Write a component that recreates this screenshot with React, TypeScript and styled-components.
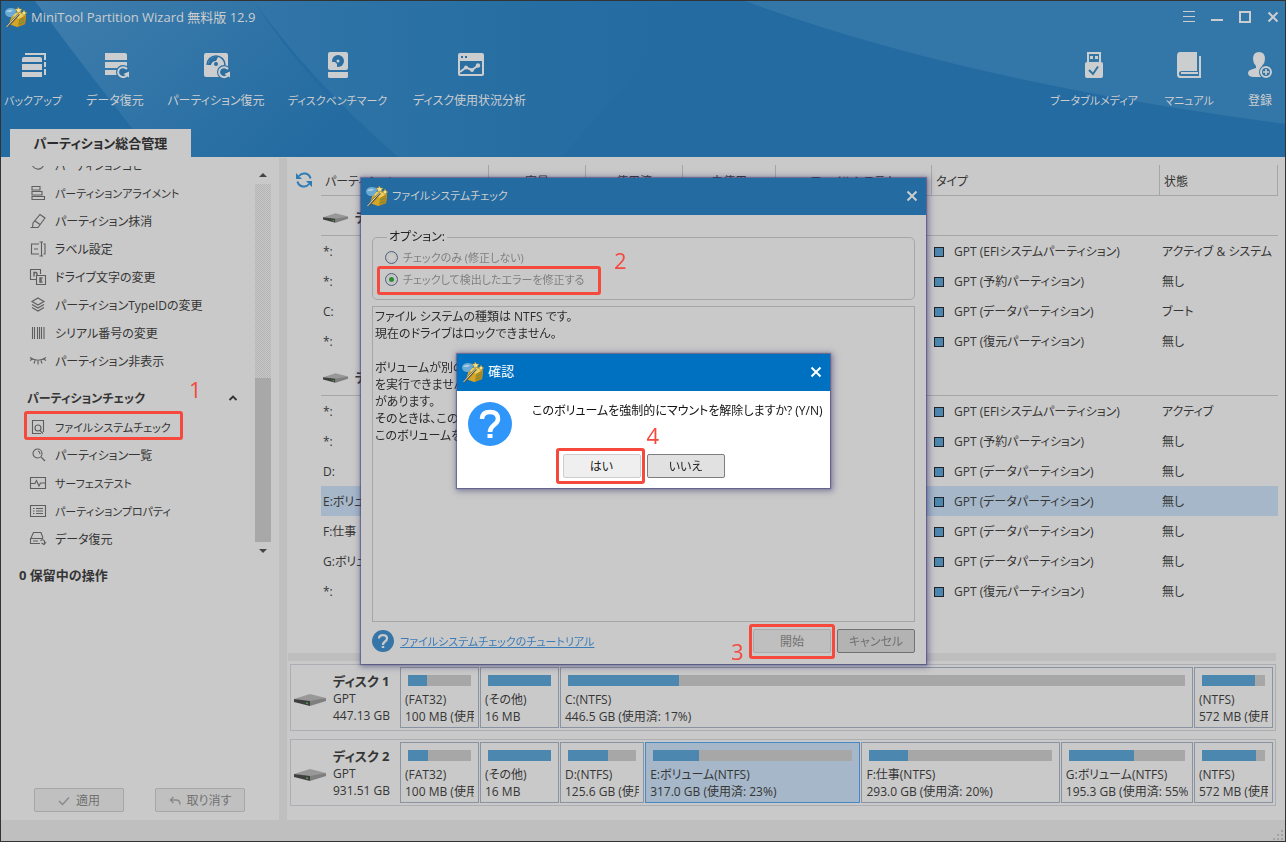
import React from "react";
import styled, { createGlobalStyle, css } from "styled-components";

const color = {
  surface: "#c9c9c9",
  panel: "#bfbfbf",
  header: "#236ba1",
  text: "#353535",
  muted: "#808080",
  line: "#a6a6a6",
  bar: "#4b87ae",
  light: "#cbcdcf",
  mark: "#f4493c",
};

const GlobalStyle = createGlobalStyle`
  * { box-sizing: border-box; }
  body {
    margin: 0;
    font-family: "Open Sans", "Noto Sans CJK JP", sans-serif;
    font-size: 12px;
    line-height: 17px;
    font-feature-settings: "palt";
    color: ${color.text};
    background: #333;
  }
  button, input, textarea {
    font: inherit;
    font-feature-settings: inherit;
    color: inherit;
    margin: 0;
    padding: 0;
  }
`;

/* Labels written only in katakana are set one size smaller than mixed ones. */
const labelSize = (label: string) => (/^[\u30a0-\u30ff]+$/.test(label) ? 11 : 12);

/* ---------- window and header ---------- */

const Window = styled.div`
  position: relative;
  display: flex;
  flex-direction: column;
  height: 100vh;
  min-height: 700px;
  overflow: hidden;
  border: 1px solid #333;
  background: ${color.surface};
`;

const Header = styled.header`
  position: relative;
  isolation: isolate;
  flex: none;
  background: ${color.header};
  color: ${color.light};
`;

const HeaderArt = styled.svg`
  position: absolute;
  inset: 0;
  z-index: -1;
  width: 100%;
  height: 100%;
`;

const TitleBar = styled.div`
  display: flex;
  align-items: center;
  gap: 4px;
  height: 32px;
  padding: 0 4px;
`;

const Title = styled.h1<{ $bright?: boolean; $small?: boolean }>`
  flex: 1;
  margin: 0;
  font-size: ${(p) => (p.$small ? 11 : 13)}px;
  font-weight: 400;
  white-space: nowrap;
  color: ${(p) => (p.$bright ? "#fff" : color.light)};
`;

const WindowControls = styled.div`
  display: flex;
  gap: 12px;
`;

const IconButton = styled.button`
  display: grid;
  place-items: center;
  width: 16px;
  height: 16px;
  border: 0;
  background: none;
`;

const Toolbar = styled.nav`
  display: flex;
  justify-content: space-between;
  height: 96px;
  padding: 19px 4px 0 4px;
`;

const ToolGroup = styled.div`
  display: flex;
  align-items: flex-start;
  gap: 25px;
`;

const Tool = styled.button<{ $width: number; $size: number }>`
  display: flex;
  flex-direction: column;
  align-items: center;
  gap: 12px;
  width: ${(p) => p.$width}px;
  border: 0;
  background: none;
  font-size: ${(p) => p.$size}px;
  white-space: nowrap;
`;

const Tab = styled.button`
  display: block;
  width: 181px;
  height: 28px;
  margin-left: 9px;
  border: 0;
  background: ${color.surface};
  color: #2d2d2d;
  font-size: 13px;
  font-weight: 700;
  white-space: nowrap;
`;

/* ---------- sidebar ---------- */

const Body = styled.div`
  display: flex;
  flex: 1;
  min-height: 0;
`;

const Sidebar = styled.aside`
  display: flex;
  flex-direction: column;
  flex: 0 0 278px;
  padding-top: 9px;
`;

const ScrollArea = styled.div`
  display: flex;
  flex: 1;
  min-height: 0;
`;

const ActionList = styled.div`
  display: flex;
  flex: 1;
  flex-direction: column;
  justify-content: flex-end;
  overflow: hidden;
  padding-bottom: 7px;
`;

const Action = styled.button<{ $size: number }>`
  display: flex;
  flex: none;
  align-items: center;
  gap: 8px;
  width: 100%;
  height: 28px;
  padding-left: 28px;
  border: 0;
  background: none;
  font-size: ${(p) => p.$size}px;
  text-align: left;
  white-space: nowrap;
`;

const ActionSlot = styled.div`
  position: relative;
  flex: none;
`;

const GroupHeader = styled.button`
  display: flex;
  flex: none;
  align-items: center;
  justify-content: space-between;
  height: 38px;
  padding: 8px 17px 0 26px;
  border: 0;
  background: none;
  font-weight: 700;
`;

const ScrollBar = styled.div`
  display: flex;
  flex-direction: column;
  align-items: center;
  width: 16px;
  margin-right: 8px;
`;

const ScrollArrow = styled.div<{ $down?: boolean }>`
  display: grid;
  place-items: center;
  width: 16px;
  height: 18px;
  svg {
    transform: ${(p) => (p.$down ? "rotate(180deg)" : "none")};
  }
`;

const ScrollTrack = styled.div`
  display: flex;
  flex: 1;
  align-items: flex-end;
  width: 16px;
  background: repeating-conic-gradient(#b5b5b5 0% 25%, #c6c6c6 0% 50%) 0 0 / 2px 2px;
`;

const ScrollThumb = styled.div`
  width: 16px;
  height: 164px;
  background: #a8a8a8;
`;

const Pending = styled.section`
  display: flex;
  flex-direction: column;
  justify-content: space-between;
  flex: 0 0 260px;
  padding: 6px 0 8px 18px;
`;

const PendingTitle = styled.h2`
  margin: 0;
  font-size: 13px;
  font-weight: 700;
  line-height: 18px;
`;

const PendingButtons = styled.div`
  display: flex;
  gap: 31px;
  padding-left: 15px;
`;

const Divider = styled.div`
  flex: 0 0 8px;
  margin-top: 1px;
  background: ${color.panel};
`;

type Tone = "faint" | "dim" | "strong" | "light" | "normal";
const tones: Record<Tone, ReturnType<typeof css>> = {
  faint: css`border-color: #a6a6a6; background: #c0c0c0; color: #717171;`,
  dim: css`border-color: #ababab; background: #bfbfbf; color: #717171;`,
  strong: css`border-color: #717171; background: #b3b3b3; color: #717171;`,
  light: css`border-color: #cdcdcd; background: #efefef; color: #222;`,
  normal: css`border-color: #7e7e7e; background: #e1e1e1; color: #222;`,
};

const Button = styled.button<{ $tone: Tone; $wide?: boolean }>`
  display: flex;
  align-items: center;
  justify-content: center;
  gap: 6px;
  width: ${(p) => (p.$wide ? 90 : 78)}px;
  height: 24px;
  padding-top: 1px;
  border: 1px solid;
  border-radius: 2px;
  ${(p) => tones[p.$tone]}
`;

/* ---------- partition table ---------- */

const Main = styled.main`
  display: flex;
  flex: 1;
  flex-direction: column;
  min-width: 0;
`;

const TableArea = styled.section`
  display: flex;
  flex: 1;
  align-items: flex-start;
  gap: 9px;
  min-height: 0;
  overflow: hidden;
  padding: 8px 7px 0 9px;
`;

const RefreshButton = styled(IconButton)`
  flex: none;
  margin-top: 7px;
`;

const Table = styled.table`
  flex: 1;
  min-width: 0;
  table-layout: fixed;
  border-collapse: separate;
  border-spacing: 0;
`;

const HeadCell = styled.th<{ $left?: boolean }>`
  height: 31px;
  padding: 2px 4px 0;
  border-right: 1px solid ${color.line};
  border-bottom: 1px solid ${color.line};
  font-weight: 400;
  text-align: ${(p) => (p.$left ? "left" : "center")};
  white-space: nowrap;
`;

const Cell = styled.td`
  height: 30px;
  padding: 1px 2px 0;
  overflow: hidden;
  white-space: nowrap;
`;

const Row = styled.tr<{ $selected?: boolean }>`
  background: ${(p) => (p.$selected ? "#a5b7c8" : "transparent")};
`;

const DiskCell = styled.td`
  height: 40px;
  padding: 4px 2px 0;
  border-bottom: 1px solid ${color.line};
  font-size: 13px;
  font-weight: 700;
  white-space: nowrap;
`;

const Inline = styled.span<{ $gap: number }>`
  display: flex;
  align-items: center;
  gap: ${(p) => p.$gap}px;
`;

const Swatch = styled.span`
  width: 10px;
  height: 10px;
  border: 1px solid #202428;
  background: #4a86ae;
`;

/* ---------- disk map ---------- */

const Splitter = styled.div`
  flex: none;
  height: 8px;
  margin: 0 9px 3px 1px;
  background: #bebebe;
`;

const DiskMap = styled.section`
  display: flex;
  flex: none;
  flex-direction: column;
  gap: 8px;
  padding: 0 9px 14px 3px;
`;

const Disk = styled.div`
  display: flex;
  gap: 1px;
  padding: 2px;
  border: 1px solid #acaeb3;
`;

const DiskInfo = styled.div`
  display: flex;
  flex: 0 0 106px;
  align-items: center;
  gap: 7px;
  padding: 2px 0 0 1px;
  white-space: nowrap;
`;

const DiskName = styled.strong`
  display: block;
  font-size: 13px;
`;

const Part = styled.div<{ $grow?: number; $selected?: boolean }>`
  flex: ${(p) => (p.$grow ? `${p.$grow} 1 0` : "0 0 79px")};
  min-width: 0;
  padding: 7px 4px 2px;
  border: 1px solid ${(p) => (p.$selected ? "#4489c4" : "#8993a1")};
  background: ${(p) => (p.$selected ? "#a5b7c8" : "transparent")};
`;

const Usage = styled.div`
  height: 11px;
  margin: 0 3px 5px;
  background: #a7a7a7;
`;

const Used = styled.div`
  height: 100%;
  background: ${color.bar};
`;

const PartLine = styled.div`
  overflow: hidden;
  white-space: nowrap;
`;

const StatusBar = styled.footer`
  display: flex;
  flex: none;
  align-items: flex-end;
  justify-content: flex-end;
  height: 21px;
  background: ${color.panel};
`;

/* ---------- dialogs ---------- */

const Layer = styled.div`
  position: fixed;
  inset: 0;
  display: grid;
  place-items: center;
  padding-left: 1px;
`;

const Dialog = styled.section<{ $front?: boolean }>`
  width: ${(p) => (p.$front ? 373 : 565)}px;
  background: ${(p) => (p.$front ? "#fff" : color.surface)};
  box-shadow: 0 0 1px 1px rgba(60, 60, 120, 0.5), 1px 1px 6px 2px rgba(50, 50, 110, 0.5);
`;

const DialogTitle = styled.div<{ $front?: boolean }>`
  display: flex;
  align-items: center;
  gap: 4px;
  height: 37px;
  padding: 0 6px 2px 5px;
  background: ${(p) => (p.$front ? "#0070c1" : color.header)};
`;

const DialogBody = styled.div`
  padding: 13px 11px 11px;
`;

const Options = styled.fieldset`
  margin: 0;
  padding: 0 12px 9px;
  border: 1px solid ${color.line};
  border-radius: 5px;
`;

const Legend = styled.legend`
  margin-left: 2px;
  padding: 0 2px;
  line-height: 18px;
  color: #222;
`;

const RadioRow = styled.label`
  display: flex;
  align-items: center;
  gap: 5px;
  height: 22px;
  color: ${color.muted};
  font-size: 11px;
  white-space: nowrap;
`;

const Radio = styled.input`
  appearance: none;
  display: grid;
  place-items: center;
  width: 13px;
  height: 13px;
  border: 1px solid #4c617c;
  border-radius: 50%;
  background: radial-gradient(#cfcfcf, #bcbcbc);
  &:checked::before {
    content: "";
    width: 5px;
    height: 5px;
    border-radius: 50%;
    background: #2d8a35;
  }
`;

const Log = styled.textarea`
  display: block;
  width: 100%;
  height: 316px;
  margin-top: 6px;
  padding: 1px 2px;
  border: 1px solid ${color.line};
  border-radius: 0;
  outline: 0;
  resize: none;
  overflow: hidden;
  background: transparent;
  color: #2c2c2c;
`;

const DialogFooter = styled.div`
  display: flex;
  align-items: center;
  gap: 6px;
  padding-top: 7px;
`;

const Tutorial = styled.a`
  flex: 1;
  color: #3b7cb8;
  font-size: 11px;
  white-space: nowrap;
`;

const Question = styled.div`
  display: flex;
  gap: 20px;
  padding: 11px 0 8px 11px;
  color: #111;
  white-space: nowrap;
`;

const Answers = styled.div`
  display: flex;
  justify-content: center;
  gap: 6px;
  padding-bottom: 10px;
`;

/* ---------- step marks ---------- */

const Marked = styled.div`
  position: relative;
`;

const MarkBox = styled.span<{ $inset: string }>`
  position: absolute;
  inset: ${(p) => p.$inset};
  border: 3px solid ${color.mark};
  border-radius: 3px;
  pointer-events: none;
`;

const MarkNumber = styled.span<{ $left: number; $top: number }>`
  position: absolute;
  left: ${(p) => p.$left}px;
  top: ${(p) => p.$top}px;
  color: ${color.mark};
  font-size: 22px;
  line-height: 24px;
`;

/* ---------- drawings ---------- */

const Logo = () => (
  <svg width="22" height="22" viewBox="0 0 22 22" aria-hidden="true">
    <path d="M7 9 L13 6 L21 9 L20 18 L12 21 L4 18 Z" fill="#d3a628" />
    <path d="M6 9 L13 6 L21 9 L14 13 Z" fill="#e8cf62" />
    <path d="M14 13 L21 9 L20 18 L13 21 Z" fill="#bb8716" />
    <path d="M0 6 Q1 2 6 2 Q10 2 12 5 L7 11 L4 11 Q0 10 0 6Z" fill="#6aa9d2" />
    <path d="M1 6 Q3 3 8 4 L6 6Z" fill="#a8cfe6" />
    <path d="M13 1 L14.500 3 L17 3 L15.500 5 L16 7 L14 6 L12 7 L12 5 L10 3 L12.500 3Z" fill="#f3e38d" stroke="#a78125" strokeWidth=".5" />
    <path d="M19 4 L20 6 L22 7 L20 8 L19 10 L18 8 L16 7 L18 6Z" fill="#f5e389" stroke="#a78125" strokeWidth=".5" />
    <path d="M2 21 L14 8" stroke="#5b5338" strokeWidth="2.200" />
    <path d="M1.500 21 L13.500 8" stroke="#d8d8cf" strokeWidth="1" />
    <path d="M14 15 L19 13 M14 18 L19 16" stroke="#5e9a54" strokeWidth="1" />
  </svg>
);

const Close = ({ fill }: { fill: string }) => (
  <svg width="12" height="12" viewBox="0 0 12 12" aria-hidden="true">
    <path d="M1.500 1.500 L10.500 10.500 M10.500 1.500 L1.500 10.500" stroke={fill} strokeWidth="2" />
  </svg>
);

const ToolIcon = ({ children }: { children: React.ReactNode }) => (
  <svg width="28" height="28" viewBox="0 0 28 28" fill="none" stroke="none" aria-hidden="true">
    {children}
  </svg>
);

const L = color.light;
const Redo = () => (
  <>
    <circle cx="22" cy="20" r="7" fill="#2a6ea2" />
    <path d="M26 17 A5 5 0 1 0 26.500 22.500" stroke={L} strokeWidth="2" />
    <path d="M28 19.500 L28 25.500 L22.500 22 Z" fill={L} />
  </>
);

const tools: Record<string, React.ReactNode> = {
  backup: (
    <>
      <path d="M7 3 V2 H26 V8 M26 10 V15 M26 17 V22 H25" stroke={L} strokeWidth="2" />
      <path d="M5 5 H21 Q23 5 23 7 V10 H3 V7 Q3 5 5 5Z M3 12 H23 V18 H3Z M3 20 H23 V25 H3Z" fill={L} />
    </>
  ),
  data: (
    <>
      <path d="M4 1 H24 Q26 1 26 3 V8 H4Z M4 10 H26 V16 H4Z M4 18 H26 V23 H4Z" fill={L} />
      <Redo />
    </>
  ),
  partition: (
    <>
      <rect x="2" y="1" width="24" height="24" rx="2" fill={L} />
      <path d="M5 13 A9 9 0 0 1 23 13" stroke="#2a6ea2" strokeWidth="1.500" />
      <path d="M6 13 A8 8 0 0 1 16 5 L14 9 Q10 9 9 13Z" fill="#2a6ea2" />
      <circle cx="14" cy="12" r="2" fill="#2a6ea2" />
      <Redo />
    </>
  ),
  bench: (
    <>
      <rect x="4" y="0" width="20" height="18" rx="2" fill={L} />
      <circle cx="14" cy="9" r="6" fill="#2a6ea2" />
      <path d="M8 15 L8 10 L11 10 L13 12 L13 15Z" fill={L} />
      <circle cx="14" cy="9" r="1.500" fill={L} />
      <path d="M4 20 H24 V25 Q24 26 22 26 H6 Q4 26 4 25Z" fill={L} />
    </>
  ),
  usage: (
    <>
      <rect x="2" y="1" width="26" height="23" rx="2" fill={L} />
      <path d="M5 4 H7 V6 H5Z M9 4 H11 V6 H9Z M4 9 H26 V22 H4Z" fill="#2a6ea2" />
      <path d="M4 20 L10 15.500 L16 18 L22 13.500" stroke={L} strokeWidth="2" />
      <circle cx="10" cy="15.500" r="2" fill={L} />
      <circle cx="16" cy="18" r="2" fill={L} />
      <circle cx="22" cy="13.500" r="2.200" fill={L} />
    </>
  ),
  usb: (
    <>
      <path d="M8 10 V1 H20 V10" stroke={L} strokeWidth="2" />
      <path d="M10 4 H13 V7 H10Z M15 4 H18 V7 H15Z" fill={L} />
      <rect x="5" y="10" width="18" height="16" rx="2" fill={L} />
      <path d="M9 18 L13 22 L18 14.500" stroke="#3074a5" strokeWidth="2" />
    </>
  ),
  manual: (
    <>
      <path d="M5 0 H22 V19 H7 Q4 19 4 22 Q4 24 6 24 H24 V4 H26 V26 H5 Q2 26 2 22 V4 Q2 0 5 0Z" fill={L} />
      <rect x="6" y="20" width="17" height="2" fill={L} />
    </>
  ),
  register: (
    <>
      <path d="M13 0 Q19 0 19 7 Q19 11 16 14 V16 L20 18 V25 H8 Q2 25 2 21 Q2 18 7 17 L10 16 V14 Q7 11 7 7 Q7 0 13 0Z" fill={L} />
      <circle cx="20" cy="20" r="7" fill="#3074a5" />
      <circle cx="20" cy="20" r="5" stroke={L} strokeWidth="2" />
      <path d="M20 17 V23 M17 20 H23" stroke={L} strokeWidth="1.600" />
    </>
  ),
};

const glyphs: Record<string, React.ReactNode> = {
  copy: <path d="M3 6 A6 6 0 1 0 15 8 H9 V3" />,
  align: <path d="M3 2.500 H11 V6 H3Z M3 7.500 H13 V11 H3Z M3 12.500 H15.500 V15.500 H3Z" />,
  erase: <path d="M1.500 15.500 H9 L16 6 L11 2.500 L4 11 L3.500 15.500 M6 9 L11 12.500" />,
  label: <path d="M10 4 H2.500 V14 H10 M5 9 H9 M10.500 2 H14 M12.500 2 V16 M10.500 16 H14 M14.500 4 H16 V14 H14.500" />,
  letter: (
    <>
      <path d="M7 11.500 H1.500 V1.500 H11.500 V6 M7.500 7.500 H16.500 V16.500 H7.500Z" />
      <path d="M5 8.500 V4.500 H7 Q8.500 5 8 7 M13.500 10 H11 V14 H13.500 M11 12 H13" strokeWidth="1.400" />
    </>
  ),
  layers: <path d="M9 2 L15 5.500 L9 9 L3 5.500Z M3 8.500 L9 12 L15 8.500 M3 11.500 L9 15 L15 11.500" />,
  barcode: <path d="M3.500 3 V15 M5.500 3 V15 M8.500 3 V15 M10.500 3 V15 M12.500 3 V15 M15 3 V15" />,
  hidden: <path d="M1 5.500 Q9 11 17 5.500 M1 8.500 L3.500 7 M5 11.500 L6 8.500 M9 12.500 V9 M13 11.500 L12 8.500 M17 8.500 L14.500 7" />,
  check: (
    <>
      <path d="M12 15.500 H3.500 V2.500 H14.500 V14" />
      <circle cx="9" cy="10" r="3" />
      <path d="M11 12.500 L14 15.500" />
    </>
  ),
  explore: (
    <>
      <circle cx="8.500" cy="7.500" r="4.500" />
      <path d="M9 5 Q11 5.500 11 8 M12 11 L16 15" />
    </>
  ),
  surface: <path d="M1.500 3.500 H16.500 V14.500 H1.500Z M1.500 9.500 H6 L7.500 6.500 L10 12 L11.500 9 H16.500" />,
  properties: <path d="M1.500 3.500 H16.500 V14.500 H1.500Z M4 6.500 H5.500 M4 9 H5.500 M4 11.500 H5.500 M7 6.500 H14 M7 9 H14 M7 11.500 H14" />,
  recover: <path d="M11 13.500 H1.500 V8.500 H14 M2 8 L4.500 2.500 H12 L14 8 M4 11 H9 M11.500 11 Q13.500 8.500 15.500 11 V14 M12.500 13 L15 14.500 L17 12" />,
};

const Glyph = ({ name }: { name: string }) => (
  <svg width="18" height="18" viewBox="0 0 18 18" fill="none" stroke="#5e5e5e" strokeWidth="1.100" aria-hidden="true">
    {glyphs[name]}
  </svg>
);

const DriveIcon = ({ width }: { width: number }) => (
  <svg width={width} height={width / 2} viewBox="0 -2 32 16" aria-hidden="true">
    <path d="M0 6 L16 1 L32 5 L16 10Z" fill="#989898" />
    <path d="M0 6 L16 8 V13 L0 9Z" fill="#3f3f3f" />
    <path d="M16 8 L32 5 V8 L16 13Z" fill="#7f7f7f" />
    <path d="M13 9.500 V11" stroke="#46c04a" strokeWidth="1.500" />
  </svg>
);

const HelpIcon = ({ size, fill, ink }: { size: number; fill: string; ink: string }) => (
  <svg width={size} height={size} viewBox="0 0 44 44" aria-hidden="true">
    <circle cx="22" cy="22" r="22" fill={fill} />
    <path d="M14 17 Q14 10 22 10 Q30 10 30 17 Q30 20 26 23 Q22 26 22 30" fill="none" stroke={ink} strokeWidth="4.500" />
    <rect x="19.500" y="32" width="5" height="4" fill={ink} />
  </svg>
);

/* ---------- data ---------- */

const leftTools = [
  ["backup", "バックアップ", 56],
  ["data", "データ復元", 58],
  ["partition", "パーティション復元", 94],
  ["bench", "ディスクベンチマーク", 99],
  ["usage", "ディスク使用状況分析", 115],
] as const;

const rightTools = [
  ["usb", "ブータブルメディア", 90],
  ["manual", "マニュアル", 50],
  ["register", "登録", 42],
] as const;

const manageActions = [
  ["copy", "パーティションコピー"],
  ["align", "パーティションアライメント"],
  ["erase", "パーティション抹消"],
  ["label", "ラベル設定"],
  ["letter", "ドライブ文字の変更"],
  ["layers", "パーティションTypeIDの変更"],
  ["barcode", "シリアル番号の変更"],
  ["hidden", "パーティション非表示"],
];

const checkActions = [
  ["explore", "パーティション一覧"],
  ["surface", "サーフェステスト"],
  ["properties", "パーティションプロパティ"],
  ["recover", "データ復元"],
];

type Volume = { name: string; type: string; state: string; selected?: boolean };
const EFI = "GPT (EFIシステムパーティション)";
const RESERVED = "GPT (予約パーティション)";
const DATA = "GPT (データパーティション)";
const RECOVERY = "GPT (復元パーティション)";

type PartInfo = { label: string; size: string; used: number; grow?: number; selected?: boolean };
type DiskData = { name: string; size: string; volumes: Volume[]; parts: PartInfo[] };

const disks: DiskData[] = [
  {
    name: "ディスク 1",
    size: "447.13 GB",
    volumes: [
      { name: "*:", type: EFI, state: "アクティブ & システム" },
      { name: "*:", type: RESERVED, state: "無し" },
      { name: "C:", type: DATA, state: "ブート" },
      { name: "*:", type: RECOVERY, state: "無し" },
    ],
    parts: [
      { label: "(FAT32)", size: "100 MB (使用済: 30%)", used: 30 },
      { label: "(その他)", size: "16 MB", used: 100 },
      { label: "C:(NTFS)", size: "446.5 GB (使用済: 17%)", used: 18, grow: 623 },
      { label: "(NTFS)", size: "572 MB (使用済: 84%)", used: 84 },
    ],
  },
  {
    name: "ディスク 2",
    size: "931.51 GB",
    volumes: [
      { name: "*:", type: EFI, state: "アクティブ" },
      { name: "*:", type: RESERVED, state: "無し" },
      { name: "D:", type: DATA, state: "無し" },
      { name: "E:ボリューム", type: DATA, state: "無し", selected: true },
      { name: "F:仕事", type: DATA, state: "無し" },
      { name: "G:ボリューム", type: DATA, state: "無し" },
      { name: "*:", type: RECOVERY, state: "無し" },
    ],
    parts: [
      { label: "(FAT32)", size: "100 MB (使用済: 32%)", used: 32 },
      { label: "(その他)", size: "16 MB", used: 100 },
      { label: "D:(NTFS)", size: "125.6 GB (使用済: 59%)", used: 59, grow: 74 },
      { label: "E:ボリューム(NTFS)", size: "317.0 GB (使用済: 23%)", used: 23, grow: 205, selected: true },
      { label: "F:仕事(NTFS)", size: "293.0 GB (使用済: 20%)", used: 21, grow: 188 },
      { label: "G:ボリューム(NTFS)", size: "195.3 GB (使用済: 55%)", used: 56, grow: 122 },
      { label: "(NTFS)", size: "572 MB (使用済: 84%)", used: 86 },
    ],
  },
];

const logText = `ファイル システムの種類は NTFS です。
現在のドライブはロックできません。

ボリュームが別のプロセスで使用されているため、CHKDSK
を実行できません。最初にボリュームのマウントを解除すれば
があります。
そのときは、このボリュームへのハンドルがすべて無効になります。
このボリュームを強制的にマウントを解除しますか?`;

/* ---------- page ---------- */

const columns = ["容量", "使用済", "未使用", "ファイルシステム"];

const PartitionTable = () => (
  <Table>
    <colgroup>
      <col style={{ width: 168 }} />
      <col style={{ width: 97 }} />
      <col style={{ width: 97 }} />
      <col style={{ width: 93 }} />
      <col style={{ width: 156 }} />
      <col />
      <col style={{ width: 118 }} />
    </colgroup>
    <thead>
      <tr>
        <HeadCell $left>パーティション</HeadCell>
        {columns.map((c) => (
          <HeadCell key={c}>{c}</HeadCell>
        ))}
        <HeadCell $left>タイプ</HeadCell>
        <HeadCell $left>状態</HeadCell>
      </tr>
    </thead>
    {disks.map((disk) => (
      <tbody key={disk.name}>
        <tr>
          <DiskCell colSpan={7}>
            <Inline $gap={7}>
              <DriveIcon width={25} />
              {disk.name}
            </Inline>
          </DiskCell>
        </tr>
        {disk.volumes.map((v, i) => (
          <Row key={i} $selected={v.selected}>
            <Cell>{v.name}</Cell>
            <Cell colSpan={4} />
            <Cell>
              <Inline $gap={10}>
                <Swatch />
                {v.type}
              </Inline>
            </Cell>
            <Cell>{v.state}</Cell>
          </Row>
        ))}
      </tbody>
    ))}
  </Table>
);

export default function App() {
  return (
    <>
      <GlobalStyle />
      <Window>
        <Header>
          <HeaderArt viewBox="0 0 1284 156" preserveAspectRatio="none" aria-hidden="true">
            <defs>
              <linearGradient id="beam" x1="0" y1="0" x2="1" y2="0.500">
                <stop offset="0" stopColor="#fff" stopOpacity=".13" />
                <stop offset="1" stopColor="#fff" stopOpacity="0" />
              </linearGradient>
              <linearGradient id="sweep" x1="0" y1="0" x2="1" y2="0">
                <stop offset="0" stopColor="#fff" stopOpacity=".07" />
                <stop offset="1" stopColor="#5fc0c0" stopOpacity="0" />
              </linearGradient>
            </defs>
            <path d="M34 0 Q84 68 154 156 H397 Q310 90 253 0Z" fill="url(#beam)" />
            <path d="M253 0 Q310 80 397 156 H560 L700 0Z" fill="url(#sweep)" />
            <path d="M744 0 Q960 80 1284 123 V0Z" fill="#fff" fillOpacity=".075" />
          </HeaderArt>
          <TitleBar>
            <Logo />
            <Title>MiniTool Partition Wizard 無料版 12.9</Title>
            <WindowControls>
              <IconButton aria-label="メニュー">
                <svg width="12" height="12" viewBox="0 0 12 12">
                  <path d="M0 .500 H12 M0 5.500 H12 M0 10.500 H12" stroke={L} />
                </svg>
              </IconButton>
              <IconButton aria-label="最小化">
                <svg width="12" height="12" viewBox="0 0 12 12">
                  <path d="M0 9 H12" stroke={L} strokeWidth="2" />
                </svg>
              </IconButton>
              <IconButton aria-label="最大化">
                <svg width="12" height="12" viewBox="0 0 12 12">
                  <rect x="1" y="1" width="10" height="10" fill="none" stroke={L} strokeWidth="2" />
                </svg>
              </IconButton>
              <IconButton aria-label="閉じる">
                <Close fill={L} />
              </IconButton>
            </WindowControls>
          </TitleBar>
          <Toolbar>
            <ToolGroup>
              {leftTools.map(([icon, label, width]) => (
                <Tool key={icon} $width={width} $size={labelSize(label)}>
                  <ToolIcon>{tools[icon]}</ToolIcon>
                  {label}
                </Tool>
              ))}
            </ToolGroup>
            <ToolGroup>
              {rightTools.map(([icon, label, width]) => (
                <Tool key={icon} $width={width} $size={labelSize(label)}>
                  <ToolIcon>{tools[icon]}</ToolIcon>
                  {label}
                </Tool>
              ))}
            </ToolGroup>
          </Toolbar>
          <Tab>パーティション総合管理</Tab>
        </Header>

        <Body>
          <Sidebar>
            <ScrollArea>
              <ActionList>
                {manageActions.map(([icon, label]) => (
                  <Action key={icon} $size={labelSize(label)}>
                    <Glyph name={icon} />
                    {label}
                  </Action>
                ))}
                <GroupHeader>
                  パーティションチェック
                  <svg width="10" height="8" viewBox="0 0 10 8" fill="none">
                    <path d="M1.500 6 L5 2.500 L8.500 6" stroke="#333" strokeWidth="1.800" />
                  </svg>
                </GroupHeader>
                <ActionSlot>
                  <Action $size={11}>
                    <Glyph name="check" />
                    ファイルシステムチェック
                  </Action>
                  <MarkBox $inset="-2px 72px 1px 23px" />
                  <MarkNumber $left={188} $top={-36}>1</MarkNumber>
                </ActionSlot>
                {checkActions.map(([icon, label]) => (
                  <Action key={icon} $size={labelSize(label)}>
                    <Glyph name={icon} />
                    {label}
                  </Action>
                ))}
              </ActionList>
              <ScrollBar>
                <ScrollArrow>
                  <svg width="8" height="4" viewBox="0 0 8 4">
                    <path d="M0 4 L4 0 L8 4Z" fill="#444" />
                  </svg>
                </ScrollArrow>
                <ScrollTrack>
                  <ScrollThumb />
                </ScrollTrack>
                <ScrollArrow $down>
                  <svg width="8" height="4" viewBox="0 0 8 4">
                    <path d="M0 4 L4 0 L8 4Z" fill="#444" />
                  </svg>
                </ScrollArrow>
              </ScrollBar>
            </ScrollArea>
            <Pending>
              <PendingTitle>0 保留中の操作</PendingTitle>
              <PendingButtons>
                <Button $tone="faint" $wide disabled>
                  <svg width="12" height="10" viewBox="0 0 12 10" fill="none">
                    <path d="M1 5 L4.500 8.500 L11 1.500" stroke="#8a8a8a" strokeWidth="1.500" />
                  </svg>
                  適用
                </Button>
                <Button $tone="faint" $wide disabled>
                  <svg width="12" height="10" viewBox="0 0 12 10" fill="none">
                    <path d="M4.500 1 L1.500 4 L4.500 7 M1.500 4 H7 Q11 4 11 8.500" stroke="#8a8a8a" strokeWidth="1.500" />
                  </svg>
                  取り消す
                </Button>
              </PendingButtons>
            </Pending>
          </Sidebar>
          <Divider />
          <Main>
            <TableArea>
              <RefreshButton aria-label="更新">
                <svg width="16" height="16" viewBox="0 0 16 16" fill="none">
                  <path d="M14.500 6.500 A6.500 6.500 0 0 0 3 4 M1.500 9.500 A6.500 6.500 0 0 0 13 12" stroke="#2f7cb5" strokeWidth="2" />
                  <path d="M0 1 V7 H6Z M16 15 V9 H10Z" fill="#2f7cb5" />
                </svg>
              </RefreshButton>
              <PartitionTable />
            </TableArea>
            <Splitter />
            <DiskMap>
              {disks.map((disk) => (
                <Disk key={disk.name}>
                  <DiskInfo>
                    <DriveIcon width={32} />
                    <div>
                      <DiskName>{disk.name}</DiskName>
                      <div>GPT</div>
                      <div>{disk.size}</div>
                    </div>
                  </DiskInfo>
                  {disk.parts.map((p, i) => (
                    <Part key={i} $grow={p.grow} $selected={p.selected}>
                      <Usage>
                        <Used style={{ width: `${p.used}%` }} />
                      </Usage>
                      <PartLine>{p.label}</PartLine>
                      <PartLine>{p.size}</PartLine>
                    </Part>
                  ))}
                </Disk>
              ))}
            </DiskMap>
          </Main>
        </Body>
        <StatusBar>
          <svg width="12" height="12" viewBox="0 0 12 12" fill="#a2a2a2" aria-hidden="true">
            <path d="M8 1 H10 V3 H8Z M8 5 H10 V7 H8Z M4 5 H6 V7 H4Z M8 9 H10 V11 H8Z M4 9 H6 V11 H4Z M0 9 H2 V11 H0Z" />
          </svg>
        </StatusBar>
      </Window>

      <Layer>
        <Dialog role="dialog" aria-label="ファイルシステムチェック">
          <DialogTitle>
            <Logo />
            <Title as="h2" $small>ファイルシステムチェック</Title>
            <IconButton aria-label="閉じる">
              <Close fill={L} />
            </IconButton>
          </DialogTitle>
          <DialogBody>
            <Options>
              <Legend>オプション:</Legend>
              <RadioRow>
                <Radio type="radio" name="mode" disabled />
                チェックのみ (修正しない)
              </RadioRow>
              <Marked>
                <RadioRow>
                  <Radio type="radio" name="mode" disabled defaultChecked />
                  チェックして検出したエラーを修正する
                </RadioRow>
                <MarkBox $inset="-2px 301px -5px -8px" />
                <MarkNumber $left={229} $top={-20}>2</MarkNumber>
              </Marked>
            </Options>
            <Log readOnly aria-label="結果" value={logText} />
            <DialogFooter>
              <HelpIcon size={22} fill="#3575a8" ink="#c5c9cc" />
              <Tutorial href="#tutorial">ファイルシステムチェックのチュートリアル</Tutorial>
              <Marked>
                <Button $tone="dim" disabled>開始</Button>
                <MarkBox $inset="-5px -4px -6px -4px" />
                <MarkNumber $left={-22} $top={10}>3</MarkNumber>
              </Marked>
              <Button $tone="strong" disabled>キャンセル</Button>
            </DialogFooter>
          </DialogBody>
        </Dialog>
      </Layer>

      <Layer>
        <Dialog $front role="alertdialog" aria-label="確認">
          <DialogTitle $front>
            <Logo />
            <Title as="h2" $bright>確認</Title>
            <IconButton aria-label="閉じる">
              <Close fill="#fff" />
            </IconButton>
          </DialogTitle>
          <Question>
            <HelpIcon size={44} fill="#3096fa" ink="#fff" />
            このボリュームを強制的にマウントを解除しますか? (Y/N)
          </Question>
          <Answers>
            <Marked>
              <Button $tone="light">はい</Button>
              <MarkBox $inset="-6px -4px -6px -7px" />
              <MarkNumber $left={84} $top={-31}>4</MarkNumber>
            </Marked>
            <Button $tone="normal">いいえ</Button>
          </Answers>
        </Dialog>
      </Layer>
    </>
  );
}
